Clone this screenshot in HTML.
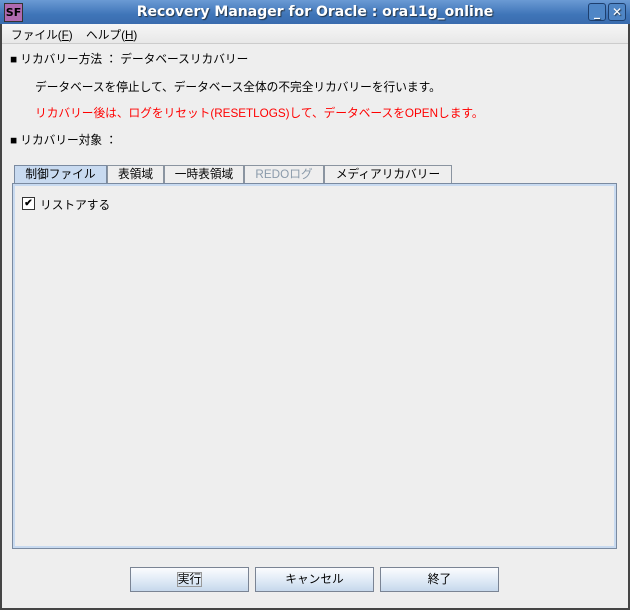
<!DOCTYPE html>
<html><head><meta charset="utf-8"><style>
body{margin:0;width:630px;height:610px;overflow:hidden;background:#2e3436;font-family:"Liberation Sans","Noto Sans CJK JP",sans-serif;font-size:11.7px;color:#000}
.win{position:absolute;left:0;top:0;width:630px;height:610px;background:#eeeeee;box-shadow:inset 2px 0 0 #444,inset -2px 0 0 #444,inset 0 -2px 0 #444}
.title{position:absolute;left:0;top:0;width:630px;height:24px;background:linear-gradient(#6a9ad4,#3f75b8 60%,#3a6cae);color:#fff;font-weight:bold;font-size:14px;text-align:center;line-height:24px;font-family:"DejaVu Sans",sans-serif;text-shadow:1px 1px 1px #234}
.logo{position:absolute;left:4px;top:3px;width:17px;height:17px;background:#b06ab0;border:1px solid #333;color:#000;font-size:11px;line-height:17px;text-align:center;text-shadow:none}
.tb{position:absolute;top:3px;width:16px;height:16px;border:1px solid #1e3f6e;border-radius:3px;background:#4f86c6;color:#fff;font-size:12px;line-height:16px;text-align:center}
.menu{position:absolute;left:2px;top:24px;width:626px;height:19px;background:linear-gradient(#f6f6f6,#e8e8e8);border-bottom:1px solid #ccc}
.menu span{position:absolute;top:2px}
.t{position:absolute;white-space:nowrap}
.tab{position:absolute;top:165px;height:18px;border:1px solid #8a94a0;border-bottom:none;background:#eee;text-align:center;line-height:18px;box-sizing:border-box}
.panel{position:absolute;left:12px;top:183px;width:605px;height:366px;border:1px solid #7a8aa0;box-sizing:border-box;box-shadow:inset 0 0 0 2px #c8daf0}
.btn{position:absolute;top:567px;width:119px;height:25px;border:1px solid #7a8494;background:linear-gradient(#fbfcfe,#dce8f5 60%,#c6d8ec);box-sizing:border-box;text-align:center;line-height:23px}
</style></head><body>
<div class="win">
<div class="title">Recovery Manager for Oracle : ora11g_online<div class="logo">SF</div>
<div class="tb" style="left:588px">_</div><div class="tb" style="left:608px">✕</div></div>
<div class="menu"><span style="left:9px">ファイル(<u>F</u>)</span><span style="left:84px">ヘルプ(<u>H</u>)</span></div>
<div class="t" style="left:10px;top:50px">■ リカバリー方法 ： データベースリカバリー</div>
<div class="t" style="left:35px;top:78px">データベースを停止して、データベース全体の不完全リカバリーを行います。</div>
<div class="t" style="left:35px;top:104px;color:#f00">リカバリー後は、ログをリセット(RESETLOGS)して、データベースをOPENします。</div>
<div class="t" style="left:10px;top:131px">■ リカバリー対象 ：</div>
<div class="tab" style="left:14px;width:93px;background:#c8daf0;border-color:#7a8aa0">制御ファイル</div>
<div class="tab" style="left:107px;width:57px">表領域</div>
<div class="tab" style="left:164px;width:80px">一時表領域</div>
<div class="tab" style="left:244px;width:80px;color:#8a9aaa">REDOログ</div>
<div class="tab" style="left:324px;width:128px">メディアリカバリー</div>
<div class="panel"></div>
<div class="t" style="left:22px;top:197px;width:11px;height:11px;border:1px solid #333;background:#fff;font-size:10px;line-height:11px;text-align:center;font-weight:bold">✔</div>
<div class="t" style="left:40px;top:196px">リストアする</div>
<div class="btn" style="left:130px"><span style="border:1px solid #999">実行</span></div>
<div class="btn" style="left:255px">キャンセル</div>
<div class="btn" style="left:380px">終了</div>
</div>
</body></html>
